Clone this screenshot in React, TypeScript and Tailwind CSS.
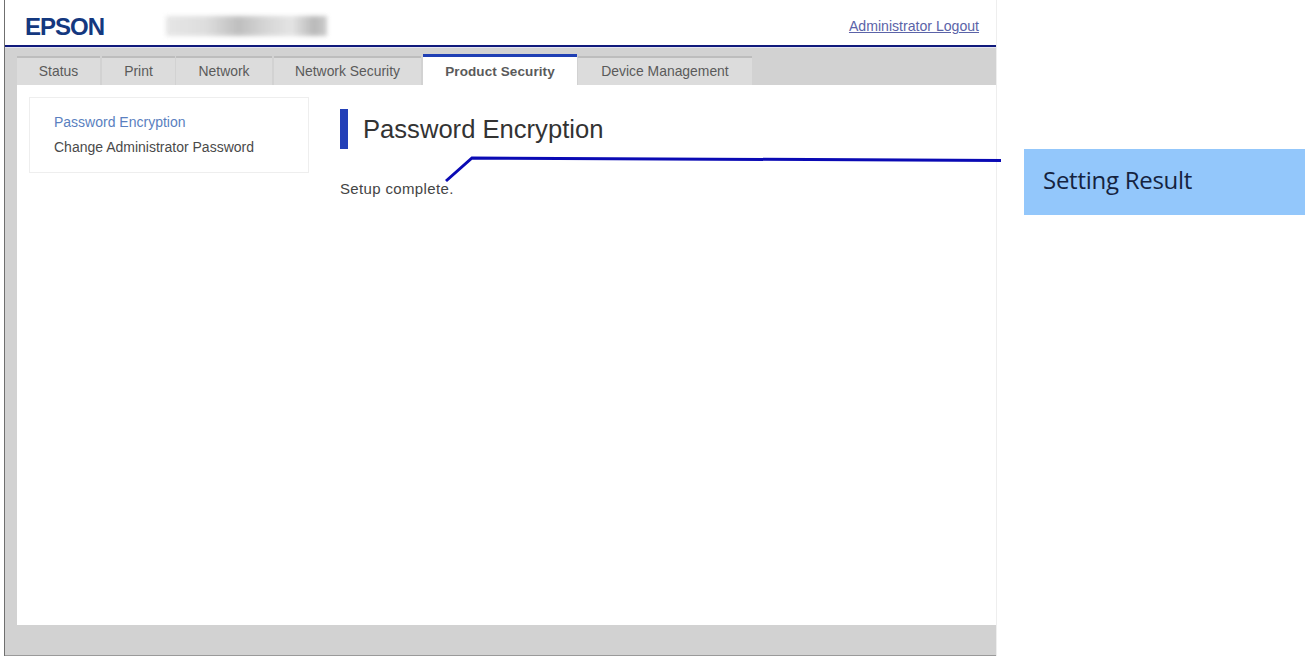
import React from "react";

const tabs = [
  { label: "Status", w: "w-[83px]", mr: "mr-[2px]" },
  { label: "Print", w: "w-[73px]", mr: "mr-[1px]" },
  { label: "Network", w: "w-[96px]", mr: "mr-[2px]" },
  { label: "Network Security", w: "w-[147px]", mr: "mr-[2px]" },
];

export default function App() {
  return (
    <div className="relative flex h-[656px] w-[1307px] overflow-hidden bg-white font-['Liberation_Sans',Arial,sans-serif]">
      {/* Browser page */}
      <div className="ml-[4px] flex h-[656px] w-[993px] flex-col border-l border-r border-l-[#6f6f6f] border-r-[#eeeeee]">
        <header className="flex h-[45px] shrink-0 items-center pl-[20px] pr-[17px]">
          <span className="mt-[8px] text-[24px] font-bold leading-none tracking-[-1px] text-[#14387f]">EPSON</span>
          <div className="ml-[62px] mt-[7px] h-[20px] w-[161px] bg-[linear-gradient(90deg,#e2e2e2_0%,#d8d8d8_25%,#b4b4b4_45%,#cfcfcf_62%,#e0e0e0_78%,#adadad_92%,#c4c4c4_100%)] opacity-85 blur-[2px]" />
          <a className="ml-auto mt-[8px] text-[14.1px] leading-none text-[#5b63a8] underline">Administrator Logout</a>
        </header>
        <div className="h-[2px] shrink-0 bg-[#101a7c]" />
        <div className="h-px shrink-0 bg-[#e4e4ee]" />
        <nav className="flex h-[37px] shrink-0 items-end bg-[#d2d2d2] pl-[12px]">
          {tabs.map((t) => (
            <div
              key={t.label}
              className={`flex h-[29px] items-center justify-center border-t-2 border-[#bdbdbd] bg-[#dcdcdc] text-[13.9px] text-[#5a5a5a] ${t.w} ${t.mr}`}
            >
              {t.label}
            </div>
          ))}
          <div className="flex h-[31px] w-[154px] items-center justify-center border-t-[3px] border-[#1f3fb4] bg-white pt-[2px] text-[13.5px] font-bold tracking-[0.1px] text-[#5a5a5a]">
            Product Security
          </div>
          <div className="ml-px flex h-[29px] w-[174px] items-center justify-center border-t-2 border-[#bdbdbd] bg-[#dcdcdc] text-[13.9px] text-[#5a5a5a]">
            Device Management
          </div>
        </nav>
        <div className="flex min-h-0 flex-1 bg-[#d2d2d2] pl-[12px]">
          <main className="flex flex-1 items-start bg-white pl-[12px] pt-[12px]">
            <aside className="h-[76px] w-[280px] shrink-0 border border-[#eeeeee] pl-[24px] pt-[12px] text-[14px] leading-[25px]">
              <div className="text-[#5a7fc0]">Password Encryption</div>
              <div className="text-[#4a4a4a]">Change Administrator Password</div>
            </aside>
            <section className="ml-[31px] pt-[12px]">
              <div className="flex h-[40px] items-center border-l-[8px] border-[#2340b8] pl-[15px] text-[25.6px] text-[#333333]">
                Password Encryption
              </div>
              <p className="mt-[32px] text-[15px] leading-none tracking-[0.35px] text-[#444444]">Setup complete.</p>
            </section>
          </main>
        </div>
        <div className="h-[30px] shrink-0 bg-[#d2d2d2]" />
        <div className="h-px shrink-0 bg-[#9a9a9a]" />
      </div>

      {/* Callout label */}
      <div className="ml-[27px] mt-[149px] flex h-[66px] w-[281px] items-center bg-[#93c7fb] pb-[4px] pl-[19px] font-['Open_Sans',sans-serif] text-[24px] tracking-[-0.27px] text-[#15233f]">
        Setting Result
      </div>

      {/* Leader line over the page */}
      <svg className="absolute left-0 top-0" width="1307" height="656" fill="none">
        <path d="M446 181 L472 158 L1001 160.5" stroke="#0a0ab4" strokeWidth="3" />
      </svg>
    </div>
  );
}
